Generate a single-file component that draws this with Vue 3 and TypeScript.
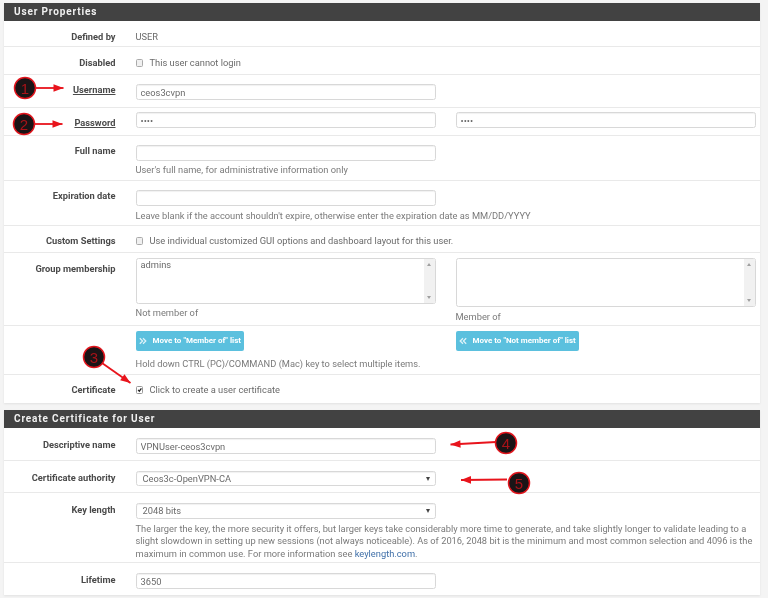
<script setup lang="ts">
const markers = [
  { n: 1, cx: 25, cy: 88 },
  { n: 2, cx: 24, cy: 124 },
  { n: 3, cx: 94, cy: 357 },
  { n: 4, cx: 506, cy: 443 },
  { n: 5, cx: 519, cy: 483 },
]
const arrows = [
  { x1: 36, y1: 88, x2: 63.5, y2: 88 },
  { x1: 35, y1: 124, x2: 62.5, y2: 124 },
  { x1: 102, y1: 363, x2: 130.5, y2: 383 },
  { x1: 496, y1: 442, x2: 450.5, y2: 444.5 },
  { x1: 507, y1: 479.5, x2: 461, y2: 480 },
]
function head(a: { x1: number; y1: number; x2: number; y2: number }): string {
  const ang = Math.atan2(a.y2 - a.y1, a.x2 - a.x1)
  const len = 10
  const w = 3.8
  const bx = a.x2 - Math.cos(ang) * len
  const by = a.y2 - Math.sin(ang) * len
  const px = -Math.sin(ang) * w
  const py = Math.cos(ang) * w
  return `${a.x2},${a.y2} ${bx + px},${by + py} ${bx - px},${by - py}`
}
</script>

<template>
  <div class="page">
    <section class="panel first">
      <h2 class="head">User Properties</h2>

      <div class="row r-defined">
        <div class="lbl">Defined by</div>
        <div class="plain">USER</div>
      </div>

      <div class="row r-disabled">
        <div class="lbl">Disabled</div>
        <label class="check"><span class="box"></span>This user cannot login</label>
      </div>

      <div class="row r-username">
        <div class="lbl"><u>Username</u></div>
        <input class="field" type="text" value="ceos3cvpn" readonly />
      </div>

      <div class="row r-password">
        <div class="lbl"><u>Password</u></div>
        <input class="field" type="password" value="abcd" readonly />
        <input class="field" type="password" value="abcd" readonly />
      </div>

      <div class="row r-fullname">
        <div class="lbl">Full name</div>
        <div class="wide">
          <input class="field short" type="text" readonly />
          <p class="help">User's full name, for administrative information only</p>
        </div>
      </div>

      <div class="row r-expiry">
        <div class="lbl">Expiration date</div>
        <div class="wide">
          <input class="field short" type="text" readonly />
          <p class="help">Leave blank if the account shouldn't expire, otherwise enter the expiration date as MM/DD/YYYY</p>
        </div>
      </div>

      <div class="row r-custom">
        <div class="lbl">Custom Settings</div>
        <label class="check wide"><span class="box"></span>Use individual customized GUI options and dashboard layout for this user.</label>
      </div>

      <div class="row r-group">
        <div class="lbl">Group membership</div>
        <div>
          <div class="list list-left">
            <span class="opt">admins</span>
            <span class="bar"><i class="up"></i><i class="down"></i></span>
          </div>
          <p class="help under">Not member of</p>
        </div>
        <div>
          <div class="list list-right">
            <span class="opt"></span>
            <span class="bar"><i class="up"></i><i class="down"></i></span>
          </div>
          <p class="help under">Member of</p>
        </div>
      </div>

      <div class="row r-move">
        <div class="lbl"></div>
        <div>
          <button class="btn" type="button">
            <svg viewBox="0 0 10 10" class="chev"><path d="M1 1.5 4.5 5 1 8.500M5 1.500 8.500 5 5 8.500" /></svg>
            Move to "Member of" list
          </button>
        </div>
        <div>
          <button class="btn" type="button">
            <svg viewBox="0 0 10 10" class="chev"><path d="M5 1.500 1.500 5 5 8.500M9 1.500 5.500 5 9 8.500" /></svg>
            Move to "Not member of" list
          </button>
        </div>
        <p class="help hold">Hold down CTRL (PC)/COMMAND (Mac) key to select multiple items.</p>
      </div>

      <div class="row r-cert last">
        <div class="lbl">Certificate</div>
        <label class="check wide"><span class="box on"><svg viewBox="0 0 10 10"><path d="M2 5.200 4.200 7.500 8 2.500" /></svg></span>Click to create a user certificate</label>
      </div>
    </section>

    <section class="panel second">
      <h2 class="head">Create Certificate for User</h2>

      <div class="row r-desc">
        <div class="lbl">Descriptive name</div>
        <input class="field" type="text" value="VPNUser-ceos3cvpn" readonly />
      </div>

      <div class="row r-ca">
        <div class="lbl">Certificate authority</div>
        <div class="select"><span>Ceos3c-OpenVPN-CA</span><i class="caret"></i></div>
      </div>

      <div class="row r-key">
        <div class="lbl">Key length</div>
        <div class="wide">
          <div class="select short"><span>2048 bits</span><i class="caret"></i></div>
          <p class="help para">The larger the key, the more security it offers, but larger keys take considerably more time to generate, and take slightly longer to validate leading to a slight slowdown in setting up new sessions (not always noticeable). As of 2016, 2048 bit is the minimum and most common selection and 4096 is the maximum in common use. For more information see <a class="link">keylength.com</a>.</p>
        </div>
      </div>

      <div class="row r-life last">
        <div class="lbl">Lifetime</div>
        <input class="field" type="text" value="3650" readonly />
      </div>
    </section>

    <svg class="notes" viewBox="0 0 768 598" width="768" height="598">
      <g v-for="(a, i) in arrows" :key="i">
        <line :x1="a.x1" :y1="a.y1" :x2="a.x2" :y2="a.y2" stroke="#e8141c" stroke-width="1.800" />
        <polygon :points="head(a)" fill="#e8141c" />
      </g>
      <g v-for="m in markers" :key="m.n">
        <circle :cx="m.cx" :cy="m.cy" r="10.500" fill="#1a1416" stroke="#e0141c" stroke-width="1.500" />
        <text :x="m.cx" :y="m.cy + 5.500" text-anchor="middle" class="num">{{ m.n }}</text>
      </g>
    </svg>
  </div>
</template>

<style>
html, body { margin: 0; background: #f4f4f4; }
</style>

<style scoped>
.page {
  position: relative;
  width: 768px;
  height: 598px;
  overflow: hidden;
  box-sizing: border-box;
  padding: 3px 8px 0 4px;
  background: #f4f4f4;
  font-family: Roboto, "Liberation Sans", sans-serif;
  font-size: 9.3px;
  line-height: 12.5px;
  color: #6a6a6a;
  filter: blur(0.45px);
}
.panel {
  background: #fff;
  box-shadow: 0 1px 2px rgba(0, 0, 0, 0.08);
}
.first { margin-bottom: 7px; }
.head {
  margin: 0;
  height: 18px;
  padding-left: 10px;
  background: #424242;
  color: #f0f0f0;
  font-size: 10px;
  font-weight: 700;
  line-height: 18px;
  letter-spacing: 0.85px;
}
.row {
  display: grid;
  grid-template-columns: 111.5px 300px 300px;
  column-gap: 20px;
  align-content: start;
  box-sizing: border-box;
  border-bottom: 1px solid #e9e9e9;
}
.row.last { border-bottom: 0; }
.lbl {
  text-align: right;
  font-weight: 700;
  color: #4a4a4a;
  line-height: 12px;
}
.second .lbl { margin-top: 1px; }
.wide { grid-column: 2 / 4; }
.plain { line-height: 12px; }
.check { display: flex; align-items: center; line-height: 12px; }
.box {
  width: 5.500px;
  height: 5.500px;
  margin-right: 6.500px;
  border: 1px solid #aaa;
  border-radius: 1.500px;
  background: #f0f0f0;
  flex: none;
}
.box.on { background: #fff; border-color: #999; }
.box svg { display: block; width: 5.500px; height: 5.500px; }
.box path { fill: none; stroke: #222; stroke-width: 2.400; }
.field {
  display: block;
  box-sizing: border-box;
  width: 300px;
  height: 16px;
  margin: 0;
  padding: 0 4px;
  border: 1px solid #d8d8d8;
  border-radius: 2.500px;
  background: #fff;
  box-shadow: inset 0 1px 1px rgba(0, 0, 0, 0.06);
  color: #6a6a6a;
  font: inherit;
  outline: none;
}
.select {
  position: relative;
  box-sizing: border-box;
  width: 300px;
  height: 15.500px;
  padding-left: 6px;
  border: 1px solid #d8d8d8;
  border-radius: 2.500px;
  line-height: 14px;
  box-shadow: inset 0 1px 1px rgba(0, 0, 0, 0.06);
}
.caret {
  position: absolute;
  right: 5px;
  top: 5px;
  border-left: 2.500px solid transparent;
  border-right: 2.500px solid transparent;
  border-top: 4px solid #444;
}
.help { margin: 0; color: #7a7a7a; }
.short + .help { margin-top: 3.500px; }
.para { margin-top: 4px !important; width: 620px; }
.list {
  position: relative;
  display: flex;
  box-sizing: border-box;
  width: 300px;
  border: 1px solid #d8d8d8;
  border-radius: 2.500px;
}
.list-left { height: 45.500px; }
.list-right { height: 49px; }
.opt { flex: 1; padding: 0 4px; line-height: 12px; }
.bar {
  position: relative;
  width: 11px;
  background: #f1f1f1;
}
.up, .down {
  position: absolute;
  left: 3px;
  border-left: 2.500px solid transparent;
  border-right: 2.500px solid transparent;
}
.up { top: 4px; border-bottom: 3px solid #a0a0a0; }
.down { bottom: 4px; border-top: 3px solid #a0a0a0; }
.under { margin-top: 3.500px; }
.btn {
  display: inline-flex;
  align-items: center;
  gap: 6px;
  height: 20px;
  margin: 0;
  padding: 0 3px;
  border: 0;
  border-radius: 2px;
  background: #5bc0de;
  color: #fff;
  font: inherit;
  font-size: 8px;
  font-weight: 700;
  white-space: nowrap;
}
.chev { width: 8px; height: 8px; flex: none; }
.chev path { fill: none; stroke: #fff; stroke-width: 1.600; opacity: 0.8; }
.hold { grid-column: 2 / 4; margin-top: 7px; }
.link { color: #3f6fa8; }

.r-defined { height: 26px; padding-top: 10px; }
.r-disabled { height: 28px; padding-top: 10px; }
.r-username { height: 33px; padding-top: 9px; }
.r-password { height: 28px; padding-top: 4px; }
.r-password .lbl { margin-top: 4.500px; }
.r-fullname { height: 45px; padding-top: 8.500px; }
.r-expiry { height: 45px; padding-top: 9px; }
.r-expiry .lbl { margin-top: -0.500px; }
.r-custom { height: 27px; padding-top: 9px; }
.r-group { height: 73px; padding-top: 5px; }
.r-group .lbl { margin-top: 5px; }
.r-move { height: 49px; padding-top: 5px; }
.r-cert { height: 28px; padding-top: 9px; }
.r-desc { height: 33px; padding-top: 10px; }
.r-ca { height: 32px; padding-top: 9.500px; }
.r-key { height: 70px; padding-top: 10px; }
.r-life { height: 32px; padding-top: 10px; }

.notes { position: absolute; left: 0; top: 0; }
.num { font-family: "Liberation Sans", sans-serif; font-size: 15px; fill: #a81218; }
</style>
